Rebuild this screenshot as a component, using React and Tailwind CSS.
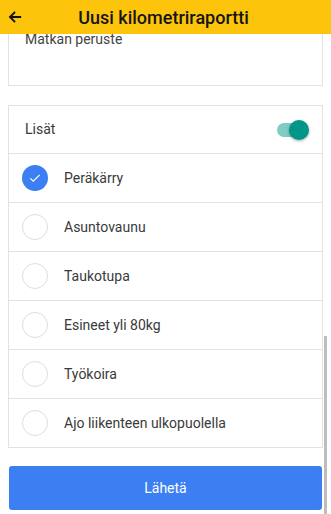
import { useState } from 'react';

const options = [
  'Peräkärry',
  'Asuntovaunu',
  'Taukotupa',
  'Esineet yli 80kg',
  'Työkoira',
  'Ajo liikenteen ulkopuolella',
];

const Check = ({ checked }) =>
  checked ? (
    <span className="flex h-[26px] w-[26px] items-center justify-center rounded-full bg-[#3b7ff2]">
      <svg width="14" height="14" viewBox="0 0 24 24" fill="none" stroke="white" strokeWidth="2">
        <path d="M4 12.5l5 5L20 6.5" />
      </svg>
    </span>
  ) : (
    <span className="h-[26px] w-[26px] rounded-full border border-[#dedede] bg-white" />
  );

const App = () => {
  const [checked, setChecked] = useState(() => [true, false, false, false, false, false]);
  const [extras, setExtras] = useState(true);

  const toggle = (i) => setChecked((prev) => prev.map((v, j) => (j === i ? !v : v)));

  return (
    <div className="relative h-[514px] w-[331px] overflow-hidden bg-white font-['Roboto',sans-serif] text-[#3a3a3a]">
      <div className="relative z-10 flex h-[34px] items-center bg-[#fdc40c] px-2">
        <svg width="14" height="14" viewBox="0 0 24 24" fill="none" stroke="#111" strokeWidth="3.2" strokeLinecap="square">
          <path d="M21 12H4M11 4.5L3.5 12 11 19.5" />
        </svg>
        <div className="flex-1 pr-[18px] text-center text-[18px] font-medium text-[#151515]">
          Uusi kilometriraportti
        </div>
      </div>

      <div className="mx-2 h-[52px] overflow-hidden border-x border-b border-[#e2e2e2]">
        <div className="-mt-[5px] px-4 text-[14px] text-[#444]">Matkan peruste</div>
      </div>

      <div className="mx-2 mt-[19px] border border-[#e2e2e2]">
        <div className="flex h-[47px] items-center justify-between px-4 text-[14px]">
          <span>Lisät</span>
          <button className="relative -mr-[3px] h-[20px] w-[34px]" onClick={() => setExtras((v) => !v)}>
            <span className={`absolute left-[2px] top-[3px] h-[14px] w-[28px] rounded-full ${extras ? 'bg-[#80cbc4]' : 'bg-[#bdbdbd]'}`} />
            <span className={`absolute top-0 h-[20px] w-[20px] rounded-full shadow-[0_1px_3px_rgba(0,0,0,0.35)] ${extras ? 'left-[14px] bg-[#009688]' : 'left-0 bg-[#f5f5f5]'}`} />
          </button>
        </div>
        {options.map((opt, i) => (
          <div
            key={opt}
            className="flex h-[49px] cursor-pointer items-center border-t border-[#e2e2e2] px-[13px] text-[14px]"
            onClick={() => toggle(i)}
          >
            <Check checked={checked[i]} />
            <span className="ml-[16px]">{opt}</span>
          </div>
        ))}
      </div>

      <div className="mx-[9px] mt-[18px]">
        <button className="flex h-[44px] w-full items-center justify-center rounded-[3px] bg-[#3b7ff2] text-[14px] text-white">
          Lähetä
        </button>
      </div>

      <div className="absolute right-[4px] top-[336px] h-[178px] w-[3px] bg-[#bdbdbd]" />
    </div>
  );
};

export default App;
